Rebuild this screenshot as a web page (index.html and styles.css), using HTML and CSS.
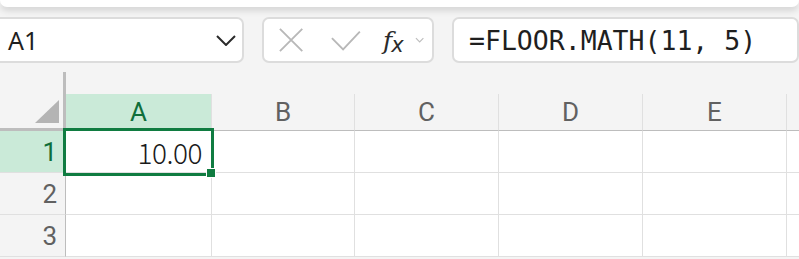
FILE: index.html
```html
<!DOCTYPE html>
<html>
<head>
    <title>FLOOR.MATH</title>
    <link rel="stylesheet" href="styles.css">
</head>
<body>
    <div class="ribbon"></div>

    <div class="formula-bar">
        <div class="name-box">
            <span class="cell-ref">A1</span>
            <svg class="chevron" width="20" height="11" viewBox="0 0 20 11">
                <path d="M1 1 L10 10 L19 1" fill="none" stroke="#2b2b2b" stroke-width="2"/>
            </svg>
        </div>
        <div class="fx-box">
            <svg class="icon" width="26" height="26" viewBox="0 0 26 26">
                <path d="M1 1 L25 25 M25 1 L1 25" stroke="#b8b8b8" stroke-width="2" fill="none"/>
            </svg>
            <svg class="icon" width="32" height="22" viewBox="0 0 32 22">
                <path d="M1 8 L13 20 L31 1" stroke="#b8b8b8" stroke-width="2" fill="none"/>
            </svg>
            <span class="fx"><i>f</i><i class="x">x</i></span>
            <svg class="small-chevron" width="10" height="6" viewBox="0 0 10 6">
                <path d="M1 1 L5 5 L9 1" stroke="#bdbdbd" stroke-width="1.2" fill="none"/>
            </svg>
        </div>
        <div class="formula">=FLOOR.MATH(11, 5)</div>
    </div>

    <div class="sheet">
        <div class="corner"><div class="tri"></div></div>
        <div class="col-head active"><span>A</span></div>
        <div class="col-head"><span>B</span></div>
        <div class="col-head"><span>C</span></div>
        <div class="col-head"><span>D</span></div>
        <div class="col-head"><span>E</span></div>
        <div class="col-head last"><span></span></div>

        <div class="row-head active">1</div>
        <div class="cell num">10.00</div>
        <div class="cell"></div>
        <div class="cell"></div>
        <div class="cell"></div>
        <div class="cell"></div>
        <div class="cell last"></div>

        <div class="row-head">2</div>
        <div class="cell"></div>
        <div class="cell"></div>
        <div class="cell"></div>
        <div class="cell"></div>
        <div class="cell"></div>
        <div class="cell last"></div>

        <div class="row-head">3</div>
        <div class="cell"></div>
        <div class="cell"></div>
        <div class="cell"></div>
        <div class="cell"></div>
        <div class="cell"></div>
        <div class="cell last"></div>

        <div class="selection"><div class="handle"></div></div>
    </div>
</body>
</html>
```

FILE: styles.css
```css
body {
    margin: 0;
    background-color: #f4f4f4;
    font-family: "Noto Sans", sans-serif;
    overflow: hidden;
}
.ribbon {
    height: 7px;
    background-color: #fff;
    border-radius: 0 0 8px 8px;
    box-shadow: 0 3px 7px rgba(0, 0, 0, 0.16);
}
.formula-bar {
    display: flex;
    gap: 18px;
    margin-top: 10px;
    height: 46px;
    margin-left: -6px;
}
.name-box,
.fx-box,
.formula {
    box-sizing: border-box;
    height: 46px;
    background-color: #fff;
    border: 2px solid #dcdcdc;
    border-radius: 7px;
    display: flex;
    align-items: center;
}
.name-box {
    width: 250px;
    padding: 0 6px 0 12px;
    justify-content: space-between;
}
.cell-ref {
    font-size: 25px;
    color: #1f1f1f;
}
.fx-box {
    width: 172px;
    padding: 0 8px 0 15px;
    gap: 0;
}
.fx-box .icon:nth-child(2) {
    margin-left: 28px;
    margin-top: 2px;
}
.fx {
    margin-left: 22px;
    font-family: "DejaVu Serif", serif;
    font-size: 25px;
    color: #2b2b2b;
    letter-spacing: -1px;
}
.fx .x {
    font-family: "DejaVu Sans", sans-serif;
    font-weight: 300;
    font-size: 21px;
    position: relative;
    top: 3px;
}
.small-chevron {
    margin-left: 12px;
}
.formula {
    flex: 1;
    padding-left: 15px;
    font-family: "DejaVu Sans Mono", monospace;
    font-size: 26.5px;
    color: #1f1f1f;
}
.sheet {
    position: relative;
    margin-top: 9px;
    display: grid;
    grid-template-columns: 66px 146px 143px 144px 144px 144px 1fr;
    grid-template-rows: 59px 42px 42px 42px;
    color: #616161;
    font-family: Roboto, sans-serif;
    font-size: 26px;
}
.corner {
    box-sizing: border-box;
    border-right: 3px solid #bdbdbd;
    border-bottom: 3px solid #bdbdbd;
    position: relative;
}
.tri {
    position: absolute;
    right: 4px;
    bottom: 5px;
    width: 0;
    height: 0;
    border-left: 24px solid transparent;
    border-bottom: 23px solid #b4b4b4;
}
.col-head {
    padding-top: 22px;
    box-sizing: border-box;
    display: flex;
}
.col-head span {
    flex: 1;
    display: flex;
    align-items: center;
    justify-content: center;
    border-right: 1px solid #e0e0e0;
    border-bottom: 1px solid #bdbdbd;
}
.col-head.last span {
    border-right: none;
}
.col-head.active span {
    background-color: #caead8;
    color: #0f6e3a;
    border-bottom-color: #caead8;
}
.row-head {
    box-sizing: border-box;
    border-right: 1px solid #bdbdbd;
    border-bottom: 1px solid #e0e0e0;
    display: flex;
    align-items: center;
    justify-content: flex-end;
    padding-right: 8px;
}
.row-head.active {
    background-color: #caead8;
    color: #0f6e3a;
}
.cell {
    background-color: #fff;
    border-right: 1px solid #e0e0e0;
    border-bottom: 1px solid #e0e0e0;
}
.cell.last {
    border-right: none;
}
.num {
    display: flex;
    align-items: center;
    justify-content: flex-end;
    padding-right: 9px;
    font-family: "Noto Sans CJK JP", sans-serif;
    font-weight: 300;
    font-size: 28px;
    letter-spacing: -0.5px;
    color: #1a1a1a;
}
.selection {
    position: absolute;
    left: 63px;
    top: 56px;
    width: 151px;
    height: 48px;
    box-sizing: border-box;
    border: 3px solid #107c41;
}
.handle {
    position: absolute;
    right: -5px;
    bottom: -5px;
    width: 8px;
    height: 8px;
    background-color: #107c41;
    border: 1px solid #fff;
}
```
